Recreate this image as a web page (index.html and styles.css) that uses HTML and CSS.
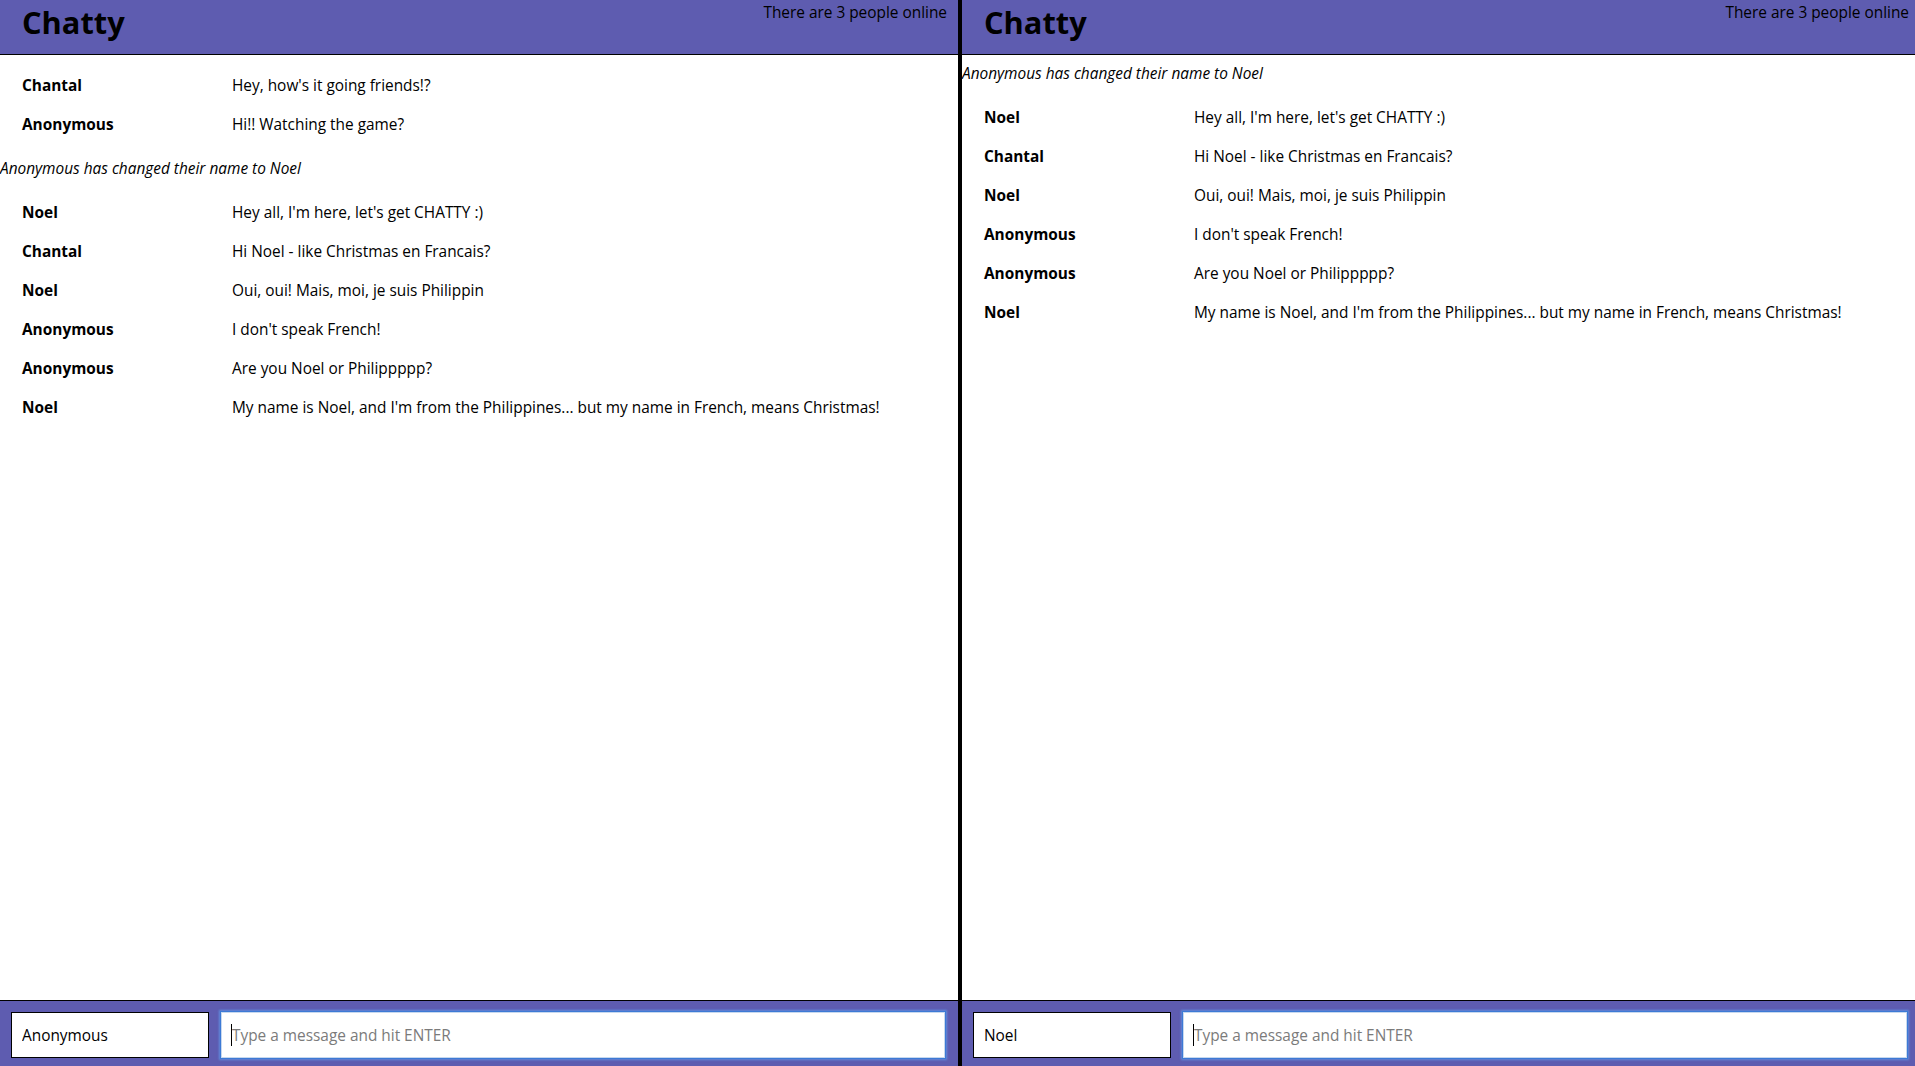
FILE: index.html
```
<!DOCTYPE html>
<html lang="en">
<head>
<meta charset="utf-8">
<title>Chatty</title>
<link rel="stylesheet" href="styles.css">
</head>
<body>
<div class="app">
  <section class="pane">
    <header class="navbar">
      <h1 class="brand">Chatty</h1>
      <span class="online">There are 3 people online</span>
    </header>
    <main class="messages">
      <div class="message"><span class="username">Chantal</span><span class="content">Hey, how's it going friends!?</span></div>
      <div class="message"><span class="username">Anonymous</span><span class="content">Hi!! Watching the game?</span></div>
      <div class="notification">Anonymous has changed their name to Noel</div>
      <div class="message"><span class="username">Noel</span><span class="content">Hey all, I'm here, let's get CHATTY :)</span></div>
      <div class="message"><span class="username">Chantal</span><span class="content">Hi Noel - like Christmas en Francais?</span></div>
      <div class="message"><span class="username">Noel</span><span class="content">Oui, oui! Mais, moi, je suis Philippin</span></div>
      <div class="message"><span class="username">Anonymous</span><span class="content">I don't speak French!</span></div>
      <div class="message"><span class="username">Anonymous</span><span class="content">Are you Noel or Philippppp?</span></div>
      <div class="message"><span class="username">Noel</span><span class="content">My name is Noel, and I'm from the Philippines... but my name in French, means Christmas!</span></div>
    </main>
    <footer class="chatbar">
      <input class="chatbar-username" type="text" value="Anonymous">
      <div class="compose">
        <input class="chatbar-message" type="text" placeholder="Type a message and hit ENTER">
        <span class="caret"></span>
      </div>
    </footer>
  </section>
  <div class="divider"></div>
  <section class="pane">
    <header class="navbar">
      <h1 class="brand">Chatty</h1>
      <span class="online">There are 3 people online</span>
    </header>
    <main class="messages">
      <div class="notification">Anonymous has changed their name to Noel</div>
      <div class="message"><span class="username">Noel</span><span class="content">Hey all, I'm here, let's get CHATTY :)</span></div>
      <div class="message"><span class="username">Chantal</span><span class="content">Hi Noel - like Christmas en Francais?</span></div>
      <div class="message"><span class="username">Noel</span><span class="content">Oui, oui! Mais, moi, je suis Philippin</span></div>
      <div class="message"><span class="username">Anonymous</span><span class="content">I don't speak French!</span></div>
      <div class="message"><span class="username">Anonymous</span><span class="content">Are you Noel or Philippppp?</span></div>
      <div class="message"><span class="username">Noel</span><span class="content">My name is Noel, and I'm from the Philippines... but my name in French, means Christmas!</span></div>
    </main>
    <footer class="chatbar">
      <input class="chatbar-username" type="text" value="Noel">
      <div class="compose">
        <input class="chatbar-message" type="text" placeholder="Type a message and hit ENTER">
        <span class="caret"></span>
      </div>
    </footer>
  </section>
</div>
</body>
</html>
```
FILE: styles.css
```
* {
  box-sizing: border-box;
}

html, body {
  margin: 0;
  padding: 0;
  height: 100%;
  overflow: hidden;
  background: #ffffff;
}

body {
  font-family: "Open Sans", "Noto Sans", sans-serif;
  font-size: 15.4px;
  color: #000;
}

.app {
  display: grid;
  grid-template-columns: 958px 4px 958px;
  height: 100vh;
}

.divider {
  background: #000;
}

.pane {
  display: flex;
  flex-direction: column;
  min-width: 0;
  height: 100vh;
}

.navbar {
  height: 55px;
  flex: 0 0 55px;
  background: #5e5cb0;
  border-bottom: 1px solid #000;
  display: flex;
  justify-content: space-between;
  align-items: flex-start;
  padding: 0 11px 0 22px;
}

.brand {
  margin: 0;
  font-size: 30.8px;
  font-weight: 700;
  line-height: 44px;
}

.online {
  font-size: 15.4px;
  line-height: 26px;
}

.messages {
  flex: 1 1 auto;
  padding-top: 11.5px;
  overflow: hidden;
}

.message {
  display: flex;
  padding: 8.5px 0;
  line-height: 22px;
}

.username {
  flex: 0 0 210px;
  padding-left: 22px;
  font-weight: 700;
  box-sizing: content-box;
}

.content {
  flex: 1 1 auto;
}

.notification {
  font-style: italic;
  line-height: 22px;
  margin: 13px 0 13.5px;
}

.notification:first-child {
  margin-top: -3.5px;
}

.chatbar {
  flex: 0 0 66px;
  height: 66px;
  background: #5e5cb0;
  border-top: 1px solid #000;
  display: flex;
  align-items: flex-start;
  gap: 12px;
  padding: 11px 11px 0;
}

.chatbar-username {
  width: 198px;
  height: 46px;
  border: 1px solid #000;
  background: #fff;
  padding: 0 10px;
  font-family: inherit;
  font-size: 15.4px;
  color: #000;
  outline: none;
}

.compose {
  position: relative;
  width: 724px;
  height: 46px;
}

.chatbar-message {
  width: 100%;
  height: 46px;
  border: 1px solid #c8d8ee;
  background: #fff;
  padding: 0 10px;
  font-family: inherit;
  font-size: 15.4px;
  color: #000;
  outline: none;
  box-shadow: 0 0 0 1px #3c7ad6, 0 0 2px 2px rgba(96, 156, 236, 0.75);
}

.chatbar-message::placeholder {
  color: #7b7b7b;
}

.caret {
  position: absolute;
  left: 10px;
  top: 12px;
  width: 1px;
  height: 22px;
  background: #000;
}
```
